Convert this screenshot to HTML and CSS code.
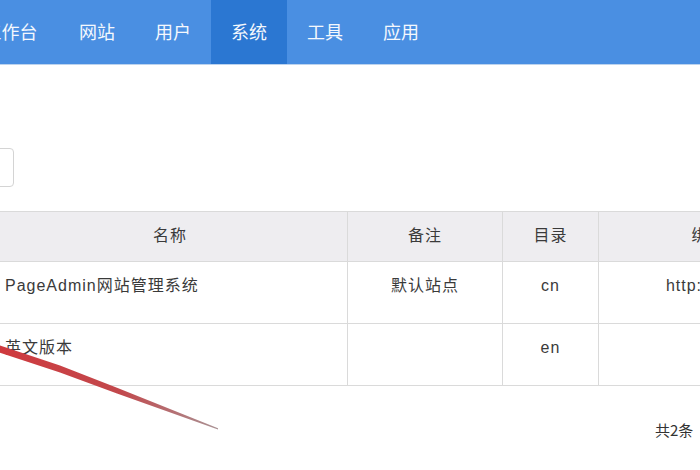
FILE: index.html
```html
<!DOCTYPE html>
<html lang="zh-CN">
<head>
<meta charset="utf-8">
<title>站点管理</title>
<link rel="stylesheet" href="styles.css">
</head>
<body>
<div class="page">
  <nav class="topnav">
    <a class="nav-item first">工作台</a>
    <a class="nav-item">网站</a>
    <a class="nav-item">用户</a>
    <a class="nav-item active">系统</a>
    <a class="nav-item">工具</a>
    <a class="nav-item">应用</a>
  </nav>
  <main class="content">
    <div class="toolbar">
      <div class="search-box"></div>
    </div>
    <table class="grid">
      <thead>
        <tr>
          <th class="c-name">名称</th>
          <th class="c-note">备注</th>
          <th class="c-dir">目录</th>
          <th class="c-domain">绑定域名</th>
        </tr>
      </thead>
      <tbody>
        <tr>
          <td class="left">PageAdmin网站管理系统</td>
          <td>默认站点</td>
          <td>cn</td>
          <td>http://localhost</td>
        </tr>
        <tr>
          <td class="left">英文版本</td>
          <td></td>
          <td>en</td>
          <td></td>
        </tr>
      </tbody>
    </table>
    <div class="pager">共2条</div>
  </main>
  <svg class="arrow" width="240" height="100" viewBox="0 0 240 100" aria-hidden="true">
    <defs>
      <linearGradient id="ag" x1="0" y1="0" x2="1" y2="0">
        <stop offset="0" stop-color="#cf3a3e"/>
        <stop offset="0.55" stop-color="#c2484c"/>
        <stop offset="1" stop-color="#a99294"/>
      </linearGradient>
    </defs>
    <path d="M0 4.5 L60 24.5 L117 46.8 L218 87.2 L218 88.4 L117 52.6 L60 31.5 L0 11.8 Z" fill="url(#ag)"/>
  </svg>
</div>
</body>
</html>
```
FILE: styles.css
```css
html, body {
  margin: 0;
  padding: 0;
  background: #ffffff;
}
body {
  width: 700px;
  height: 470px;
  overflow: hidden;
  font-family: "Liberation Sans", "Noto Sans CJK SC", sans-serif;
  color: #333333;
}
.page {
  position: relative;
  width: 700px;
  height: 470px;
  overflow: hidden;
}
.topnav {
  display: flex;
  height: 65px;
  background: #4a8fe2;
  margin-left: -38px;
  border-bottom: 1px solid #bcd3ee;
  box-sizing: border-box;
}
.nav-item {
  display: flex;
  align-items: center;
  justify-content: center;
  width: 38px;
  padding: 0 19px 2px;
  height: 62px;
  color: #f4f8fd;
  font-family: "Noto Sans CJK SC", sans-serif;
  font-size: 18px;
  line-height: 1;
  white-space: nowrap;
  box-sizing: content-box;
}
.nav-item.first {
  width: 59px;
}
.nav-item.active {
  background: #2b77d2;
}
.content {
  margin-left: -8px;
  width: 900px;
}
.toolbar {
  padding-top: 83px;
  height: 40px;
}
.search-box {
  width: 180px;
  margin-left: -160px;
  height: 37px;
  border: 1px solid #d4d4d4;
  border-radius: 4px;
  background: #ffffff;
}
.grid {
  margin-top: 23px;
  border-collapse: collapse;
  table-layout: fixed;
  width: 860px;
  font-size: 16px;
  letter-spacing: 1px;
}
.grid th, .grid td {
  border: 1px solid #dadada;
  text-align: center;
  color: #3a3a3a;
}
.grid th {
  background: #eeedf0;
  height: 50px;
  font-weight: normal;
  padding: 0 0 6px;
  box-sizing: border-box;
}
.grid td {
  height: 61px;
  padding: 12px 0 25px;
  line-height: 24px;
  vertical-align: top;
  box-sizing: border-box;
}
.grid td.left {
  text-align: left;
  padding-left: 12px;
}
.c-name { width: 355px; }
.c-note { width: 155px; }
.c-dir { width: 96px; }
.c-domain { width: 254px; }
.pager {
  margin-left: 663px;
  margin-top: 33px;
  font-size: 15px;
  white-space: nowrap;
  color: #333333;
  font-family: "Noto Sans CJK SC", sans-serif;
}
.arrow {
  position: absolute;
  left: 0;
  top: 341px;
}
```
